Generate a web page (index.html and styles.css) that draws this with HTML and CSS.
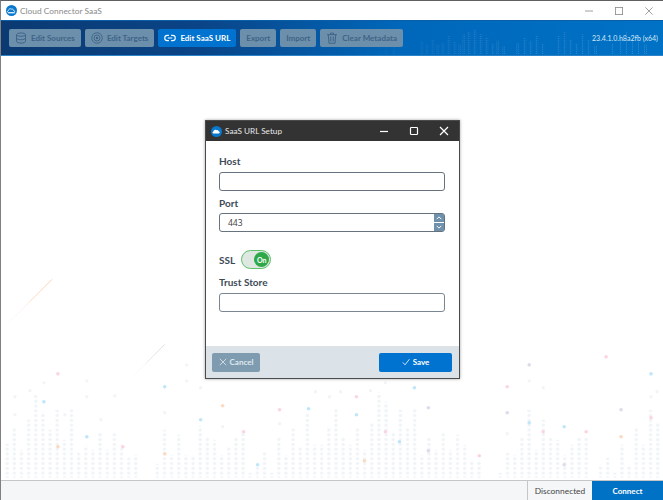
FILE: index.html
```html
<!DOCTYPE html>
<html lang="en">
<head>
<meta charset="utf-8">
<title>Cloud Connector SaaS</title>
<link rel="stylesheet" href="styles.css">
</head>
<body>
<div class="app">
  <div class="titlebar">
    <svg class="logo" viewBox="0 0 16 16"><circle cx="8" cy="8" r="8" fill="#0a78cc"/><path d="M3.500 11c-1.600-.2-1.800-2.600 0-3 .3-2 2.600-3.300 4.300-2 1.500-.6 3 .3 3.200 1.800 2 .1 2.200 3 .4 3.200z" fill="none" stroke="#fff" stroke-width="1.200"/><path d="M3 11.500h10" stroke="#fff" stroke-width="1"/></svg>
    <span class="app-title">Cloud Connector SaaS</span>
    <div class="win-controls">
      <svg viewBox="0 0 10 10" class="win-ic"><path d="M0 5h10" stroke="#888" stroke-width="1"/></svg>
      <svg viewBox="0 0 10 10" class="win-ic"><rect x=".5" y=".5" width="9" height="9" fill="none" stroke="#888"/></svg>
      <svg viewBox="0 0 10 10" class="win-ic"><path d="M.5.500l9 9M9.500.500l-9 9" stroke="#888" stroke-width="1"/></svg>
    </div>
  </div>

  <header class="toolbar">
    <svg class="toolbar-art" viewBox="0 0 663 36" preserveAspectRatio="none" aria-hidden="true">
      <defs>
        <pattern id="hdots" width="2" height="2" patternUnits="userSpaceOnUse"><rect width="1" height="1" fill="#fff"/></pattern>
        <linearGradient id="hfade" x1="0" x2="1"><stop offset=".52" stop-color="#fff" stop-opacity="0"/><stop offset=".72" stop-color="#fff" stop-opacity="1"/></linearGradient>
        <mask id="hmask"><rect width="663" height="36" fill="url(#hfade)"/></mask>
      </defs>
      <g mask="url(#hmask)">
      <path fill="url(#hdots)" opacity=".2" d="M346 24h3v12h-3zM352 20h3v16h-3zM358 26h3v10h-3zM366 22h3v14h-3zM384 26h3v10h-3zM392 24h3v12h-3zM420 22h3v14h-3zM425 25h3v11h-3zM431 19h3v17h-3zM436 25h3v11h-3zM441 23h3v13h-3zM447 16h3v20h-3zM453 22h3v14h-3zM458 25h3v11h-3zM462 14h3v22h-3zM467 11h3v25h-3zM473 9h3v27h-3zM479 14h3v22h-3zM485 18h3v18h-3zM491 24h3v12h-3zM496 21h3v15h-3zM502 27h3v9h-3zM516 23h3v13h-3zM523 17h3v19h-3zM529 21h3v15h-3zM535 16h3v20h-3zM541 24h3v12h-3zM557 16h3v20h-3zM563 11h3v25h-3zM569 20h3v16h-3zM575 24h3v12h-3zM581 14h3v22h-3zM587 20h3v16h-3zM594 26h3v10h-3zM611 24h3v12h-3zM619 17h3v19h-3zM625 11h3v25h-3zM631 18h3v18h-3zM637 22h3v14h-3zM644 25h3v11h-3z"/>
      </g>
    </svg>
    <nav class="tools">
      <button class="tool off"><svg viewBox="0 0 16 16" class="tool-ic"><g fill="none" stroke="currentColor" stroke-width="1.300"><ellipse cx="8" cy="3.500" rx="6" ry="2.300"/><path d="M2 3.500v9c0 1.300 2.700 2.300 6 2.300s6-1 6-2.300v-9M2 8c0 1.300 2.700 2.300 6 2.300S14 9.300 14 8"/></g></svg>Edit Sources</button>
      <button class="tool off"><svg viewBox="0 0 16 16" class="tool-ic"><g fill="none" stroke="currentColor" stroke-width="1.200"><circle cx="8" cy="8" r="7"/><circle cx="8" cy="8" r="4"/></g><circle cx="8" cy="8" r="1.600" fill="currentColor"/></svg>Edit Targets</button>
      <button class="tool on"><svg viewBox="0 0 16 16" class="tool-ic"><path d="M6.500 4.500H4.500a3.500 3.500 0 0 0 0 7h2M9.500 4.500h2a3.500 3.500 0 0 1 0 7h-2M5 8h6" fill="none" stroke="currentColor" stroke-width="1.500"/></svg>Edit SaaS URL</button>
      <button class="tool off">Export</button>
      <button class="tool off">Import</button>
      <button class="tool off"><svg viewBox="0 0 16 16" class="tool-ic"><path d="M1.500 3.500h13M6 3V1.500h4V3M3 3.500l1 11.500h8l1-11.500M6.300 6v6.500M9.700 6v6.500" fill="none" stroke="currentColor" stroke-width="1.300"/></svg>Clear Metadata</button>
    </nav>
    <span class="version">23.4.1.0.h8a2fb (x64)</span>
  </header>

  <main class="stage">
    <svg class="stage-art" viewBox="0 56 663 424" aria-hidden="true">
      <defs>
        <pattern id="dots" x="2.580" y="0.600" width="7.160" height="4.800" patternUnits="userSpaceOnUse"><circle cx="3.580" cy="2.400" r="1.750" fill="#eff4f7"/></pattern>
        <linearGradient id="l1" gradientUnits="userSpaceOnUse" x1="51" y1="279" x2="2" y2="328"><stop offset="0" stop-color="#fbcfae"/><stop offset=".45" stop-color="#fcdcc6"/><stop offset=".5" stop-color="#faf0e9"/><stop offset="1" stop-color="#fff"/></linearGradient>
        <linearGradient id="l2" gradientUnits="userSpaceOnUse" x1="164" y1="344" x2="127" y2="382"><stop offset="0" stop-color="#dcdfe5"/><stop offset=".45" stop-color="#e6e8ec"/><stop offset=".55" stop-color="#f6f7f9"/><stop offset="1" stop-color="#fff"/></linearGradient>
      </defs>
      <path fill="url(#dots)" d="M2.500 444h7.160V478h-7.160zM9.660 427h7.160V478h-7.160zM16.800 450h7.160V478h-7.160zM24 420h7.160V478h-7.160zM31.100 394h7.160V478h-7.160zM38.300 412h7.160V478h-7.160zM45.500 430h7.160V478h-7.160zM52.600 410h7.160V478h-7.160zM59.800 440h7.160V478h-7.160zM67 408h7.160V478h-7.160zM74.100 453h7.160V478h-7.160zM81.300 446h7.160V478h-7.160zM88.400 450h7.160V478h-7.160zM95.600 432h7.160V478h-7.160zM102.800 450h7.160V478h-7.160zM109.900 433h7.160V478h-7.160zM117.100 445h7.160V478h-7.160zM124.200 458h7.160V478h-7.160zM131.400 455h7.160V478h-7.160zM153 464h7.160V478h-7.160zM160.100 430h7.160V478h-7.160zM167.300 455h7.160V478h-7.160zM174.500 435h7.160V478h-7.160zM181.600 455h7.160V478h-7.160zM188.800 456h7.160V478h-7.160zM196 426h7.160V478h-7.160zM203.100 437h7.160V478h-7.160zM210.300 440h7.160V478h-7.160zM217.400 455h7.160V478h-7.160zM224.600 447h7.160V478h-7.160zM231.800 437h7.160V478h-7.160zM239 432h7.160V478h-7.160zM246 473h7.160V478h-7.160zM253.200 465h7.160V478h-7.160zM260.400 452h7.160V478h-7.160zM267.500 473h7.160V478h-7.160zM274.700 437h7.160V478h-7.160zM281.800 455h7.160V478h-7.160zM289 427h7.160V478h-7.160zM296.200 447h7.160V478h-7.160zM303.300 413h7.160V478h-7.160zM310.500 445h7.160V478h-7.160zM317.700 445h7.160V478h-7.160zM324.800 427h7.160V478h-7.160zM332 408h7.160V478h-7.160zM339.200 437h7.160V478h-7.160zM346.300 445h7.160V478h-7.160zM353.500 427h7.160V478h-7.160zM360.600 450h7.160V478h-7.160zM367.800 423h7.160V478h-7.160zM375 393h7.160V478h-7.160zM382.100 402h7.160V478h-7.160zM389.300 432h7.160V478h-7.160zM396.400 410h7.160V478h-7.160zM403.600 427h7.160V478h-7.160zM410.800 408h7.160V478h-7.160zM418 455h7.160V478h-7.160zM425.100 437h7.160V478h-7.160zM432.300 450h7.160V478h-7.160zM439.400 432h7.160V478h-7.160zM446.600 450h7.160V478h-7.160zM453.800 435h7.160V478h-7.160zM460.900 445h7.160V478h-7.160zM468 460h7.160V478h-7.160zM475.200 460h7.160V478h-7.160zM496.700 473h7.160V478h-7.160zM503.900 453h7.160V478h-7.160zM511 455h7.160V478h-7.160zM518.200 437h7.160V478h-7.160zM525.400 410h7.160V478h-7.160zM532.500 450h7.160V478h-7.160zM539.700 420h7.160V478h-7.160zM546.900 437h7.160V478h-7.160zM554 440h7.160V478h-7.160zM561.200 455h7.160V478h-7.160zM568.300 445h7.160V478h-7.160zM575.500 437h7.160V478h-7.160zM582.700 437h7.160V478h-7.160zM597 465h7.160V478h-7.160zM604.200 458h7.160V478h-7.160zM611.300 473h7.160V478h-7.160zM618.500 445h7.160V478h-7.160zM625.700 465h7.160V478h-7.160zM632.800 427h7.160V478h-7.160zM640 445h7.160V478h-7.160zM647.100 410h7.160V478h-7.160zM654.300 423h7.160V478h-7.160z"/>
      <g fill="#f1f5f7">
        <circle cx="14" cy="397" r="1.700"/><circle cx="14" cy="415" r="1.700"/><circle cx="29" cy="391" r="1.700"/><circle cx="43" cy="383" r="1.700"/><circle cx="86" cy="381" r="1.700"/><circle cx="86" cy="397" r="1.700"/><circle cx="64" cy="415" r="1.700"/><circle cx="100" cy="420" r="1.700"/><circle cx="114" cy="396" r="1.700"/><circle cx="186" cy="365" r="1.700"/><circle cx="186" cy="381" r="1.700"/><circle cx="164" cy="413" r="1.700"/><circle cx="200" cy="388" r="1.700"/><circle cx="222" cy="427" r="1.700"/><circle cx="279" cy="424" r="1.700"/><circle cx="315" cy="392" r="1.700"/><circle cx="329" cy="397" r="1.700"/><circle cx="340" cy="392" r="1.700"/><circle cx="385" cy="383" r="1.700"/><circle cx="370" cy="391" r="1.700"/><circle cx="529" cy="381" r="1.700"/><circle cx="543" cy="388" r="1.700"/><circle cx="507" cy="434" r="1.700"/><circle cx="651" cy="397" r="1.700"/><circle cx="657" cy="392" r="1.700"/>
      </g>
      <g>
        <circle cx="57" cy="374" r="1.800" fill="#fbd5e1"/><circle cx="43" cy="402" r="1.800" fill="#bfe6f9"/><circle cx="57" cy="447" r="1.800" fill="#fcd9bf"/><circle cx="164" cy="387" r="1.800" fill="#bfe6f9"/><circle cx="86" cy="437" r="1.800" fill="#bfe6f9"/><circle cx="122" cy="447" r="1.800" fill="#fbd5e1"/><circle cx="164" cy="454" r="1.800" fill="#fcd9bf"/><circle cx="200" cy="420" r="1.800" fill="#bfe6f9"/>
        <circle cx="222" cy="406" r="1.800" fill="#fcd9bf"/><circle cx="279" cy="410" r="1.800" fill="#fbd5e1"/><circle cx="243" cy="432" r="1.800" fill="#fbd5e1"/><circle cx="257" cy="465" r="1.800" fill="#bfe6f9"/><circle cx="308" cy="409" r="1.800" fill="#bfe6f9"/><circle cx="356" cy="397" r="1.800" fill="#fbd5e1"/><circle cx="356" cy="415" r="1.800" fill="#bfe6f9"/><circle cx="414" cy="388" r="1.800" fill="#bfe6f9"/><circle cx="428" cy="408" r="1.800" fill="#e0daec"/><circle cx="385" cy="432" r="1.800" fill="#fbd5e1"/><circle cx="399" cy="442" r="1.800" fill="#bfe6f9"/><circle cx="428" cy="451" r="1.800" fill="#e0daec"/><circle cx="364" cy="461" r="1.800" fill="#fcd9bf"/>
        <circle cx="606" cy="357" r="1.800" fill="#fbd5e1"/><circle cx="651" cy="374" r="1.800" fill="#bfe6f9"/><circle cx="529" cy="365" r="1.800" fill="#e0daec"/><circle cx="507" cy="387" r="1.800" fill="#fbd5e1"/><circle cx="507" cy="413" r="1.800" fill="#e0daec"/><circle cx="621" cy="410" r="1.800" fill="#e0daec"/><circle cx="651" cy="418" r="1.800" fill="#fbd5e1"/><circle cx="529" cy="423" r="1.800" fill="#bfe6f9"/><circle cx="543" cy="432" r="1.800" fill="#fbd5e1"/><circle cx="564" cy="427" r="1.800" fill="#bfe6f9"/><circle cx="586" cy="432" r="1.800" fill="#fbd5e1"/><circle cx="621" cy="437" r="1.800" fill="#fcd9bf"/><circle cx="479" cy="456" r="1.800" fill="#fbd5e1"/><circle cx="564" cy="465" r="1.800" fill="#e0daec"/>
      </g>
      <path d="M51 279.500L2 328.500" stroke="url(#l1)" stroke-width="1" fill="none"/>
      <path d="M164 344.500L127 382" stroke="url(#l2)" stroke-width="1" fill="none"/>
    </svg>

    <section class="dialog">
      <div class="dlg-bar">
        <svg class="dlg-logo" viewBox="0 0 16 16"><circle cx="8" cy="8" r="8" fill="#0a78cc"/><path d="M3.500 11c-1.600-.2-1.800-2.600 0-3 .3-2 2.600-3.300 4.300-2 1.500-.6 3 .3 3.200 1.800 2 .1 2.200 3 .4 3.200z" fill="#fff"/></svg>
        <span class="dlg-title">SaaS URL Setup</span>
        <div class="dlg-controls">
          <svg viewBox="0 0 10 10" class="dlg-ic"><path d="M1 5.500h8" stroke="#fff" stroke-width="1.200"/></svg>
          <svg viewBox="0 0 10 10" class="dlg-ic"><rect x="1.500" y="1.500" width="7" height="7" rx=".8" fill="none" stroke="#fff" stroke-width="1.200"/></svg>
          <svg viewBox="0 0 10 10" class="dlg-ic"><path d="M1 1l8 8M9 1l-8 8" stroke="#fff" stroke-width="1.200"/></svg>
        </div>
      </div>
      <form class="dlg-body">
        <label class="lbl lbl-first">Host</label>
        <div class="field"></div>
        <label class="lbl lbl-port">Port</label>
        <div class="field field-port">
          <span class="val">443</span>
          <span class="spin">
            <span class="spin-btn"><svg viewBox="0 0 8 5" class="chev"><path d="M1 4l3-3 3 3" fill="none" stroke="#fff" stroke-width="1.300"/></svg></span>
            <span class="spin-btn"><svg viewBox="0 0 8 5" class="chev"><path d="M1 1l3 3 3-3" fill="none" stroke="#fff" stroke-width="1.300"/></svg></span>
          </span>
        </div>
        <div class="ssl-row">
          <span class="lbl lbl-inline">SSL</span>
          <span class="switch"><span class="knob">On</span></span>
        </div>
        <label class="lbl lbl-trust">Trust Store</label>
        <div class="field field-trust"></div>
      </form>
      <div class="dlg-foot">
        <button class="btn btn-cancel"><svg viewBox="0 0 10 10" class="btn-ic"><path d="M1 1l8 8M9 1l-8 8" stroke="currentColor" stroke-width="1"/></svg>Cancel</button>
        <button class="btn btn-save"><svg viewBox="0 0 10 10" class="btn-ic"><path d="M1 5.500l2.800 3L9.300 1.500" fill="none" stroke="currentColor" stroke-width="1"/></svg>Save</button>
      </div>
    </section>
  </main>

  <footer class="status">
    <span class="state">Disconnected</span>
    <button class="connect">Connect</button>
  </footer>
</div>
</body>
</html>
```
FILE: styles.css
```css
* { box-sizing: border-box; }
html, body { margin: 0; height: 100%; }
body { font-family: Lato, "Open Sans", sans-serif; background: #fff; overflow: hidden; }
button { font-family: inherit; border: 0; padding: 0; margin: 0; }

.app { display: flex; flex-direction: column; width: 663px; height: 500px; border-top: 1px solid #5f5f5f; border-left: 1px solid #808080; }

.titlebar { height: 19px; flex: none; display: flex; align-items: center; padding-left: 5px; background: #fff; }
.logo { width: 11px; height: 11px; margin-right: 3px; }
.app-title { font: 8.400px Lato, sans-serif; color: #8a8a8a; }
.win-controls { margin-left: auto; display: flex; align-items: center; gap: 22px; padding-right: 10px; }
.win-ic { width: 8px; height: 8px; display: block; }

.toolbar { position: relative; height: 36px; flex: none; display: flex; align-items: center; padding: 0 5px 0 8px; background: linear-gradient(90deg, #0b3a72 0, #0a4487 30%, #0067ba 60%, #0072c6 100%); border-top: 1px solid #0a5ea8; border-bottom: 1px solid #2e84c8; }
.toolbar-art { position: absolute; inset: 0; width: 100%; height: 100%; }
.tools { position: relative; display: flex; gap: 4px; }
.tool { height: 18px; display: flex; align-items: center; justify-content: center; gap: 4px; padding: 0 6px; border-radius: 2px; font-size: 8px; font-weight: 700; }
.tool.off { background: #6c8fab; color: #3f6487; }
.tool.on { background: #0072cf; color: #fff; }
.tool-ic { width: 12px; height: 12px; flex: none; }
.version { position: relative; margin-left: auto; font: 7px Lato, sans-serif; color: #d5e6f5; }

.stage { position: relative; flex: 1; min-height: 0; background: #fff; }
.stage-art { position: absolute; inset: 0; width: 662px; height: 424px; }

.dialog { position: absolute; left: 204px; top: 64px; width: 255px; height: 259px; display: flex; flex-direction: column; background: #fff; border: 1px solid #4a4a4a; box-shadow: 0 0 3px rgba(0,0,0,.35); }
.dlg-bar { height: 20px; flex: none; display: flex; align-items: center; padding-left: 5px; background: #333; }
.dlg-logo { width: 11px; height: 11px; margin-right: 3px; }
.dlg-title { font: 8.200px Lato, sans-serif; color: #e8e8e8; }
.dlg-controls { margin-left: auto; display: flex; gap: 20px; padding-right: 10px; }
.dlg-ic { width: 10px; height: 10px; display: block; }

.dlg-body { flex: 1; display: flex; flex-direction: column; padding: 0 14px 0 13px; }
.lbl { display: block; font-size: 10px; font-weight: 700; color: #3d4a57; line-height: 12px; }
.lbl-first { margin-top: 14px; }
.lbl-port { margin-top: 6px; }
.lbl-trust { margin-top: 7px; }
.lbl-inline { margin: 0; }
.field { height: 19px; margin-top: 5px; display: flex; align-items: center; background: #fff; border: 1px solid #66727e; border-radius: 3px; }
.field-port { margin-top: 4px; height: 19px; }
.field-trust { border-color: #7a8691; }
.val { font: 8.500px "Open Sans", sans-serif; color: #3c3c3c; padding-left: 8px; }
.spin { margin-left: auto; height: 17px; width: 10px; display: flex; flex-direction: column; gap: 1px; }
.spin-btn { flex: 1; display: flex; align-items: center; justify-content: center; background: #6f91ab; }
.chev { width: 6px; height: 4px; }

.ssl-row { display: flex; align-items: center; gap: 6px; margin-top: 18px; height: 19px; }
.switch { width: 30px; height: 19px; display: flex; align-items: center; justify-content: flex-end; padding-right: 1px; background: #dfe7e3; border: 1px solid #5dc26a; border-radius: 10px; }
.knob { width: 15px; height: 15px; display: flex; align-items: center; justify-content: center; border-radius: 50%; background: #2fa84a; color: #fff; font-size: 7px; font-weight: 700; }

.dlg-foot { height: 32px; flex: none; display: flex; align-items: center; justify-content: space-between; padding: 0 7px 0 6px; background: #dce3e8; }
.btn { height: 19px; display: flex; align-items: center; justify-content: center; gap: 3px; border-radius: 2px; font-size: 8px; font-weight: 700; }
.btn-ic { width: 8px; height: 8px; }
.btn-cancel { width: 48px; background: #7f9bb0; color: #dfe8ee; }
.btn-save { width: 73px; background: #0072cf; color: #fff; }

.status { height: 20px; flex: none; display: flex; justify-content: flex-end; background: #f5f6f8; border-top: 1px solid #c4c6c8; }
.state { width: 65px; display: flex; align-items: center; justify-content: center; font: 8.400px Lato, sans-serif; color: #444; border-left: 1px solid #c4c6c8; }
.connect { width: 71px; background: #0072c6; color: #fff; font-size: 8px; font-weight: 700; }
```
